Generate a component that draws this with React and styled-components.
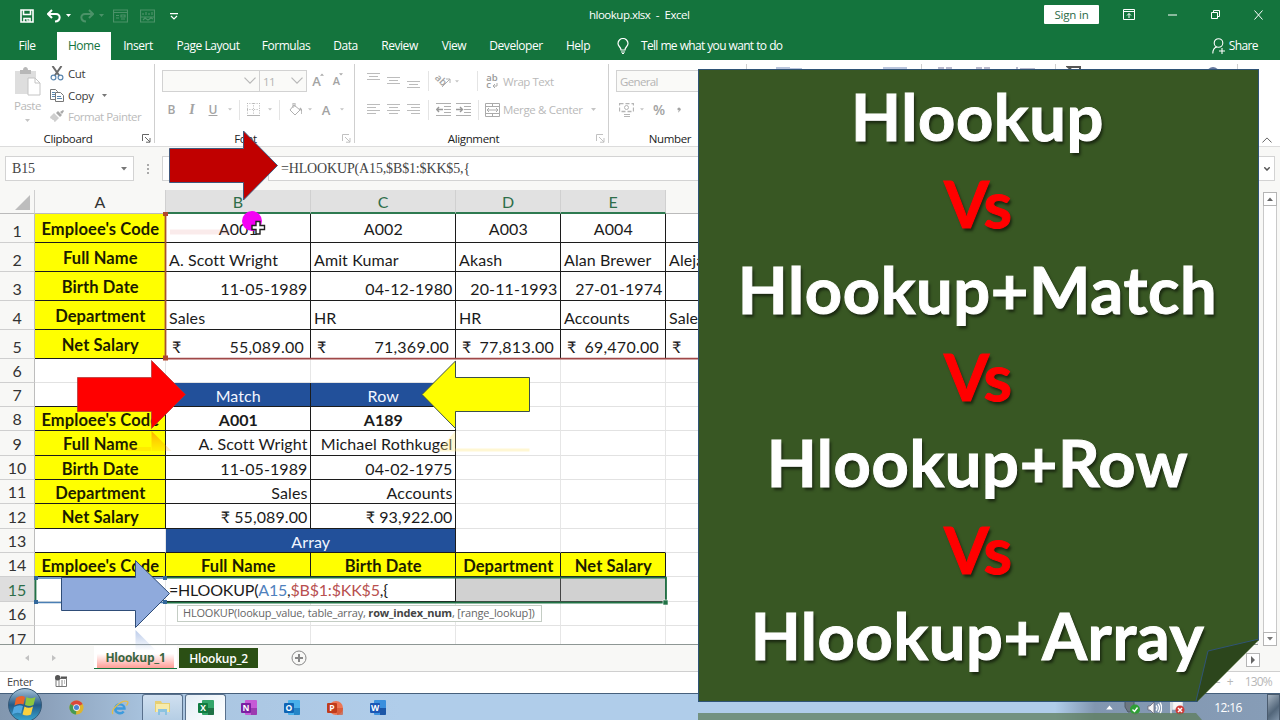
import React from 'react';
import styled, { createGlobalStyle, css } from 'styled-components';

const colors = {
    excel: '#14743d',
    panel: '#385723',
    panelEdge: '#2f5376',
    yellow: '#ffff00',
    blue: '#22509a',
    faint: '#b9b9b9',
    black: '#1c1c1c',
};
const uiFont = `'Open Sans', 'Noto Sans', sans-serif`;
const cellFont = `Lato, 'Noto Sans', sans-serif`;

const GlobalStyle = createGlobalStyle`
    * { box-sizing: border-box; }
    body { margin: 0; overflow: hidden; }
    svg { display: block; flex: none; }
`
const Window = styled.div`
    position: relative;
    width: 1280px;
    height: 720px;
    overflow: hidden;
    display: flex;
    flex-direction: column;
    background: #fff;
    font-family: ${uiFont};
    font-size: 12px;
    color: #333;
    white-space: nowrap;
`

/* title bar and tabs */
const TitleBar = styled.div`
    height: 32px;
    flex: none;
    background: ${colors.excel};
    color: #fff;
    display: grid;
    grid-template-columns: 589px 102px 1fr;
    align-items: center;
    font-size: 11.5px;
    letter-spacing: -0.5px;
`
const QuickTools = styled.div`
    display: flex;
    align-items: center;
    padding-left: 20px;
`
const FileTitle = styled.div`
    padding-bottom: 4px;
    word-spacing: 3px;
`
const WindowTools = styled.div`
    display: flex;
    justify-content: flex-end;
    align-items: center;
    padding-bottom: 3px;
`
const SignIn = styled.div`
    width: 55px;
    height: 19px;
    margin-right: 8px;
    background: #fff;
    color: #2c6b49;
    border-radius: 1px;
    display: flex;
    align-items: center;
    justify-content: center;
    letter-spacing: -0.2px;
`
const Slot = styled.div`
    width: ${props => props.$w}px;
    flex: none;
    display: flex;
    justify-content: center;
    align-items: center;
`
const TabBar = styled.div`
    height: 28px;
    flex: none;
    display: flex;
    background: ${colors.excel};
    color: #fff;
    font-size: 12px;
    letter-spacing: -0.45px;
`
const Tab = styled.div`
    width: ${props => props.$w}px;
    margin-right: ${props => props.$gap || 0}px;
    display: flex;
    align-items: center;
    justify-content: center;
    padding-bottom: 1px;
    ${props => props.$active && css`
        background: #fff;
        color: ${colors.excel};
    `}
`
const TellMe = styled.div`
    display: flex;
    align-items: center;
    gap: 12px;
    padding: 0 0 1px 14px;
    letter-spacing: -0.7px;
    word-spacing: 0.4px;
`
const Share = styled.div`
    display: flex;
    align-items: center;
    gap: 4px;
    margin-left: auto;
    padding: 0 22px 1px 0;
    letter-spacing: -0.6px;
`

/* ribbon */
const Ribbon = styled.div`
    height: 87px;
    flex: none;
    display: flex;
    background: #fff;
    border-bottom: 1px solid #dcdcdc;
    padding-top: 4px;
    font-size: 11.5px;
`
const Group = styled.div`
    width: ${props => props.$w}px;
    height: 79px;
    flex: none;
    display: flex;
    flex-direction: column;
    border-right: 1px solid #cfcfcf;
    color: ${colors.faint};
`
const GroupBody = styled.div`
    height: 67px;
    flex: none;
    display: flex;
    flex-direction: ${props => (props.$row ? 'row' : 'column')};
    padding-left: ${props => props.$left || 0}px;
`
const GroupName = styled.div`
    height: 15px;
    flex: none;
    display: flex;
    align-items: center;
    color: #222;
    font-size: 11.5px;
    letter-spacing: -0.35px;
    span {
        flex: 1;
        padding-right: ${props => props.$shift || 0}px;
        text-align: center;
    }
    svg { margin-right: 3px; opacity: ${props => (props.$dim ? 0.4 : 1)}; }
`
const PasteButton = styled.div`
    width: 50px;
    display: flex;
    flex-direction: column;
    align-items: center;
    padding: 3px 0 0 5px;
    line-height: 20px;
    letter-spacing: -0.5px;
    svg + span { margin-bottom: 3px; }
`
const CommandList = styled.div`
    display: flex;
    flex-direction: column;
`
const Command = styled.div`
    height: 21.5px;
    display: flex;
    align-items: center;
    gap: 4px;
    padding-bottom: 2px;
    color: ${props => (props.$off ? '#bbb' : '#3c3c3c')};
    letter-spacing: ${props => props.$ls || 0}px;
`
const ToolRow = styled.div`
    height: ${props => props.$h || 28}px;
    display: flex;
    align-items: center;
`
const Combo = styled.div`
    width: ${props => props.$w}px;
    height: 22px;
    margin-right: -1px;
    flex: none;
    display: flex;
    align-items: center;
    justify-content: space-between;
    padding: 0 3px;
    border: 1px solid #d2d2d2;
    background: #fafaf8;
    color: #b4b4b4;
    letter-spacing: -0.65px;
`
const Letter = styled.span`
    font-size: ${props => props.$size || 12}px;
    line-height: ${props => props.$lh || 16}px;
    font-weight: ${props => props.$weight || 600};
    font-style: ${props => (props.$italic ? 'italic' : 'normal')};
    font-family: ${props => (props.$italic ? `'Liberation Serif', serif` : uiFont)};
    text-decoration: ${props => (props.$under ? 'underline' : 'none')};
    color: #a3a3a3;
`
const Tick = styled.span`
    align-self: flex-start;
    margin-left: -1px;
`
const ToolLine = styled.div`
    width: 1px;
    height: 20px;
    background: #e4e4e4;
`
const ToolText = styled.span`
    width: ${props => props.$w}px;
    letter-spacing: ${props => props.$ls}px;
`
const TextGlyph = styled.svg`
    overflow: visible;
`
const WrapGlyph = styled.div`
    height: 18px;
    display: flex;
    flex-direction: column;
    justify-content: center;
    font-size: 9.5px;
    font-weight: 600;
    line-height: 7px;
    color: #999;
    div {
        display: flex;
        align-items: flex-end;
        gap: 1px;
    }
`
const HiddenTools = styled.div`
    flex: 1;
    display: flex;
    justify-content: flex-end;
    align-items: flex-end;
    padding: 0 8px 3px 0;
`

/* formula bar */
const FormulaBar = styled.div`
    height: 43px;
    flex: none;
    display: flex;
    align-items: flex-start;
    padding: 9px 0 0 5px;
    background: #f8f8f6;
    font-family: 'Liberation Serif', serif;
    font-size: 14px;
    letter-spacing: -0.15px;
    color: #444;
`
const NameBox = styled.div`
    width: 129px;
    height: 25px;
    display: flex;
    align-items: center;
    justify-content: space-between;
    padding: 0 6px;
    background: #fff;
    border: 1px solid #d3d3d3;
`
const FormulaDots = styled.div`
    width: 28px;
    height: 25px;
    display: flex;
    align-items: center;
    justify-content: center;
`
const FormulaTools = styled.div`
    width: 101px;
    height: 25px;
    margin-right: 5px;
    background: #fff;
    border: 1px solid #d3d3d3;
`
const FormulaInput = styled.div`
    width: 1007px;
    height: 25px;
    display: flex;
    align-items: center;
    justify-content: space-between;
    padding: 1px 4px 0 12px;
    background: #fff;
    border: 1px solid #d3d3d3;
`

/* sheet */
const SheetArea = styled.div`
    height: 456px;
    flex: none;
    display: flex;
    background: #f8f8f6;
`
const Grid = styled.div`
    width: 1258px;
    height: 455px;
    overflow: hidden;
    font-family: ${cellFont};
    font-size: 16px;
    color: #1b1b1b;
    border-bottom: 1px solid #8e9794;
`
const Row = styled.div`
    display: grid;
    grid-template-columns: 35px 131px 145px 145px 105px 105px 1fr;
    height: ${props => props.$h}px;
    background: #fff;
`
const Corner = styled.div`
    display: flex;
    align-items: flex-end;
    justify-content: flex-end;
    padding: 0 4px 3px 0;
    background: #f8f8f6;
    border-right: 1px solid #cfcfcf;
    border-bottom: 1px solid #bbb;
`
const ColumnHead = styled.div`
    display: flex;
    align-items: center;
    justify-content: center;
    background: ${props => (props.$on ? '#e1e1e1' : '#f8f8f6')};
    color: ${props => (props.$on ? '#2e6e4a' : '#333')};
    border-right: 1px solid #d0d0d0;
    border-bottom: ${props => (props.$on ? '2px solid #2e7a50' : '1px solid #bbb')};
    padding-top: ${props => (props.$on ? 1 : 0)}px;
`
const RowHead = styled.div`
    display: flex;
    align-items: flex-end;
    justify-content: center;
    line-height: 22px;
    letter-spacing: -0.1px;
    background: ${props => (props.$on ? '#dedede' : '#f8f8f6')};
    color: ${props => (props.$on ? '#2e6e4a' : '#333')};
    border-right: 1px solid #bdbdbd;
    border-bottom: 1px solid #cfcfcf;
`
const aligns = { l: 'flex-start', c: 'center', r: 'flex-end', s: 'space-between' };
const fills = {
    label: css`
        background: ${colors.yellow};
        color: #1c1c00;
        font-weight: 700;
        font-size: 16.5px;
        letter-spacing: 0.1px;
    `,
    head: css`
        background: ${colors.blue};
        color: #f2f6ff;
    `,
    bold: css`
        font-weight: 700;
        letter-spacing: -0.05px;
    `,
    grey: css`
        background: #d1d1d1;
        border-color: #444;
    `,
};
const Cell = styled.div`
    display: flex;
    align-items: ${props => (props.$low ? 'flex-end' : 'center')};
    justify-content: ${props => aligns[props.$align] || 'center'};
    grid-column: span ${props => props.$span || 1};
    min-width: 0;
    overflow: hidden;
    line-height: 20px;
    letter-spacing: ${props => (props.$money ? 0.25 : 0.1)}px;
    padding-top: ${props => (props.$low ? 0 : 2)}px;
    padding-right: ${props => (props.$money ? 6 : 2.5)}px;
    padding-bottom: ${props => (props.$low ? 1 : 0)}px;
    padding-left: ${props => (props.$money ? 6 : 3)}px;
    border-right: 1px solid ${props => (props.$box ? colors.black : '#e6e6e6')};
    border-bottom: 1px solid ${props => (props.$box || props.$under ? colors.black : '#e2e2e2')};
    ${props => fills[props.$fill]}
`
const FormulaCell = styled(Cell)`
    overflow: visible;
    letter-spacing: -0.2px;
    .ref { color: #4f81bd; }
    .range { color: #b8504f; }
`
const ScrollColumn = styled.div`
    width: 22px;
    display: flex;
    flex-direction: column;
    justify-content: space-between;
    align-items: center;
    padding: 2px 0 0 2px;
`
const ScrollTrack = styled.div`
    width: 14px;
    flex: 1;
    background: #fff;
    border: 1px solid #c9c9c9;
    border-width: 0 1px;
`
const ScrollButton = styled.div`
    width: 14px;
    height: 14px;
    display: flex;
    align-items: center;
    justify-content: center;
    background: #fff;
    border: 1px solid #b5b5b5;
`

/* bottom bars */
const SheetTabs = styled.div`
    height: 26px;
    flex: none;
    display: flex;
    align-items: flex-start;
    background: #f8f8f6;
    border-bottom: 1px solid #cfcfcf;
    font-size: 12px;
    font-weight: 600;
`
const SheetTab = styled.div`
    width: ${props => props.$w}px;
    height: ${props => (props.$active ? 22 : 20)}px;
    margin-top: ${props => (props.$active ? 0 : 2)}px;
    display: flex;
    align-items: center;
    justify-content: center;
    background: ${props => (props.$active ? 'linear-gradient(#fff 35%, #ff9d96)' : '#2b4f14')};
    color: ${props => (props.$active ? '#386641' : '#fff')};
    font-weight: ${props => (props.$active ? 700 : 600)};
    letter-spacing: -0.25px;
    border: 3px solid #fff;
    border-width: ${props => (props.$active ? '0 3px' : '0')};
    box-shadow: ${props => (props.$active ? `0 1px 0 ${colors.excel}` : 'none')};
    margin-right: 2px;
`
const SheetEnd = styled.div`
    margin: 7px 20px 0 auto;
`
const StatusBar = styled.div`
    height: 21px;
    flex: none;
    display: flex;
    align-items: center;
    padding: 0 8px 3px 7px;
    background: #fff;
    font-size: 11px;
    letter-spacing: -0.3px;
    color: #444;
    svg { margin-left: 22px; }
`
const Zoom = styled.div`
    display: flex;
    gap: 7px;
    margin-left: auto;
    color: #b7b7b7;
    font-size: 12px;
    letter-spacing: -0.8px;
    span:nth-child(2) { margin-right: 5px; }
`
const Taskbar = styled.div`
    height: 28px;
    flex: none;
    display: flex;
    align-items: center;
    border-top: 1px solid #46607c;
    background: linear-gradient(90deg, #8297af 0, #8a9fb9 40px, #a9c4df 150px, #b0cdea 400px, #b0cdea 1055px, #8196b0 1095px, #879db7 1280px);
`
const TaskButton = styled.div`
    width: 41px;
    height: 27px;
    margin-right: 2px;
    display: flex;
    align-items: center;
    justify-content: center;
    ${props => props.$open && css`
        border: 1px solid #58708c;
        border-bottom: 0;
        border-radius: 3px 3px 0 0;
        background: ${props.$front ? 'linear-gradient(135deg, #e4eef6, #fff)' : 'linear-gradient(#d0e0f0, #b4cde4)'};
    `}
`
const Tray = styled.div`
    display: flex;
    align-items: center;
    margin-left: auto;
`
const Clock = styled.div`
    width: 78px;
    padding-bottom: 1px;
    text-align: center;
    color: #fff;
    font-size: 12px;
    letter-spacing: -0.6px;
`
const ShowDesktop = styled.div`
    width: 13px;
    height: 27px;
    border: 1px solid #4a5b6e;
    background: linear-gradient(135deg, #a5b2c0, #52667a 60%, #7f93a8);
`

/* things lying over the workbook */
const Overlay = styled.svg`
    position: absolute;
    left: 0;
    top: 0;
`
const Hint = styled.div`
    position: absolute;
    left: 177px;
    top: 605px;
    width: 365px;
    height: 17px;
    display: flex;
    align-items: center;
    padding: 0 0 3px 5px;
    background: #fff;
    border: 1px solid #c4cdc4;
    color: #666;
    font-size: 11px;
    letter-spacing: -0.18px;
    b { color: #444; }
    span { white-space: pre; }
`
const Panel = styled.div`
    position: absolute;
    left: 698px;
    top: 69px;
    width: 561px;
    height: 633px;
    display: flex;
    flex-direction: column;
    align-items: center;
    padding: 3px 2px 0 0;
    background: ${colors.panel};
    border: 1px solid ${colors.panelEdge};
    clip-path: polygon(0 0, 100% 0, 100% 571px, 499px 100%, 0 100%);
`
const PanelLine = styled.div`
    height: 86.5px;
    display: flex;
    align-items: center;
    font-family: ${cellFont};
    font-weight: 700;
    font-size: 65px;
    letter-spacing: ${props => props.$ls}px;
    color: ${props => (props.$vs ? '#ff0000' : '#fff')};
    -webkit-text-stroke: 1px ${props => (props.$vs ? '#ff0000' : '#fff')};
    text-shadow: 2px 3px 3px rgba(0, 0, 0, 0.55);
`

const Caret = ({ color = '#777', size = 6, up }) => (
    <svg width={size} height={size / 2 + 1} viewBox="0 0 6 4">
        <path d={up ? 'M0 4h6L3 .5z' : 'M0 0h6L3 3.5z'} fill={color} />
    </svg>
)
const Chevron = ({ up, w = 12, color = '#b8b8b8', sw = 1.2 }) => (
    <svg width={w} height={w * 0.6} viewBox="0 0 12 7" fill="none" stroke={color} strokeWidth={sw}>
        <path d={up ? 'M.5 6.5L6 1l5.5 5.5' : 'M.5.5L6 6 11.5.5'} />
    </svg>
)
const Launcher = () => (
    <svg width="9" height="9" viewBox="0 0 9 9" fill="none" stroke="#666">
        <path d="M.5 7V.5H7M3 3l5 5M8 4v4.2H4" />
    </svg>
)
const Lines = ({ rows, color = '#bcbcbc' }) => (
    <svg width="14" height="18" viewBox="0 0 14 18" fill="none" stroke={color}>
        {rows.map(([x, y, w]) => <path key={y} d={`M${x} ${y + 0.5}h${w}`} />)}
    </svg>
)
const Indent = ({ right }) => (
    <svg width="16" height="13" viewBox="0 0 16 13" fill="none" stroke="#b0b0b0">
        <path d="M0 .5h15M8 3.5h7M8 6.5h7M8 9.5h7M0 12.5h15" />
        <path d={right ? 'M0 6.5h6M4 4l2.5 2.5L4 9' : 'M1 6.5h6M3 4L.7 6.5 3 9'} stroke="#999" strokeWidth="1.4" />
    </svg>
)
const PasteIcon = () => (
    <svg width="27" height="29" viewBox="0 0 27 29">
        <path d="M1 4h21v23H1z" fill="#dedede" />
        <path d="M6 3h3c0-4 5-4 5 0h3v4H6z" fill="#b8b8b8" />
        <path d="M14 11h7l5 5v12H14z" fill="#fff" stroke="#c4c4c4" />
        <path d="M21 11v5h5" fill="none" stroke="#c4c4c4" />
    </svg>
)
const CutIcon = () => (
    <svg width="14" height="15" viewBox="0 0 14 15" fill="none" strokeWidth="1.6">
        <path d="M2.5 0L9.5 10M11.5 0L4.5 10" stroke="#6b6b6b" strokeWidth="2" />
        <circle cx="3.5" cy="11.5" r="2.4" stroke="#5b87b0" strokeWidth="1.2" />
        <circle cx="10.5" cy="11.5" r="2.4" stroke="#5b87b0" strokeWidth="1.2" />
    </svg>
)
const CopyIcon = () => (
    <svg width="14" height="13" viewBox="0 0 14 13" fill="#fff" stroke="#777">
        <path d="M.5.5h5l2 2v8h-7z" />
        <path d="M2 3.5h3M2 5.5h3M2 7.5h3" stroke="#5b87b0" />
        <path d="M5.5 3.5h5l3 3v6h-8z" />
        <path d="M7 7.5h4M7 9.5h5" stroke="#5b87b0" />
    </svg>
)
const BrushIcon = () => (
    <svg width="14" height="13" viewBox="0 0 14 13">
        <path d="M0 7l4-4 5 5-4 4c-1 0-1-1-1-2-1 1-2-1-2-1-1 0-2-1-2-2z" fill="#cfcfcf" />
        <path d="M6 3l2-2 4 4-2 2zM10 2l3-2 1 1-2 3z" fill="#a9a9a9" />
    </svg>
)
const SaveIcon = () => (
    <svg width="14" height="14" viewBox="0 0 14 14" fill="none" stroke="#fff" strokeWidth="1.6">
        <path d="M1 1h12v12H1zM3.5 1v4.5h7V1M4 13V9.500h6V13" />
        <path d="M6 11h2v2" strokeWidth="1.2" />
    </svg>
)
const UndoIcon = ({ flip, color = '#fff' }) => (
    <svg width="14" height="14" viewBox="0 0 14 14" fill="none" stroke={color} strokeWidth="2">
        <g transform={flip ? 'matrix(-1 0 0 1 14 0)' : undefined}>
            <path d="M5 1L1 5l4 4M1.5 5H9c5 0 5 7-1 7.5" />
        </g>
    </svg>
)
const FormIcon = ({ chart }) => (
    <svg width="15" height="14" viewBox="0 0 15 14" fill="none" stroke="#4b9268" strokeWidth="1.2">
        <path d="M.5 1h14v12H.5z" />
        {chart
            ? <path d="M3 6V4M6 6V3M9 6V4M12 6V3M1 8h13M3 11l2-2 3 2 3-2 2 1" />
            : <path d="M.5 3.5h14M3 6.5h3M3 9h3M8 6h4v2H8zM8 10h4" />}
    </svg>
)
const BulbIcon = () => (
    <svg width="12" height="16" viewBox="0 0 12 16" fill="none" stroke="#fff" strokeWidth="1.2">
        <path d="M4 12C4 9 1 8.5 1 5.5a5 5 0 0110 0C11 8.5 8 9 8 12zM4 14h4M5 15.5h2" />
    </svg>
)
const ShareIcon = () => (
    <svg width="13" height="16" viewBox="0 0 13 16" fill="none" stroke="#fff" strokeWidth="1.1">
        <circle cx="6.5" cy="5" r="4.3" />
        <path d="M.8 15.5c0-4 2-6 4-6.5M10 10v6M7 13h6" />
    </svg>
)
const RestoreIcon = () => (
    <svg width="9" height="9" viewBox="0 0 9 9" fill="none" stroke="#fff">
        <path d="M.5 2.5h6v6h-6zM2.5 2V.5h6v6H7" />
    </svg>
)
const OfficeIcon = ({ color, dark, light, letter, round }) => (
    <svg width="16" height="16" viewBox="0 0 16 16">
        {round
            ? <circle cx="9" cy="8" r="7" fill={light} />
            : <rect x="4" y="0" width="12" height="15" rx="1" fill={light} />}
        <path d="M10 8h6v6q0 1-1 1h-5z" fill={color} opacity=".7" />
        <rect x="0" y="3" width="10" height="10" rx="1" fill={dark} />
        <text x="5" y="11.3" textAnchor="middle" fontFamily="Open Sans" fontWeight="700" fontSize="8.5" fill="#fff">{letter}</text>
    </svg>
)
const ChromeIcon = () => (
    <svg width="15" height="15" viewBox="0 0 16 16">
        <circle cx="8" cy="8" r="7.5" fill="#ddb52f" />
        <path d="M8 8L1.5 4.2A7.5 7.5 0 0114.5 4.2z" fill="#d9473c" />
        <path d="M8 8L1.5 4.2A7.5 7.5 0 007.5 15.5z" fill="#469a50" />
        <circle cx="8" cy="8" r="3.6" fill="#eee" />
        <circle cx="8" cy="8" r="2.7" fill="#4a83d4" />
    </svg>
)
const ExplorerIcon = () => (
    <svg width="18" height="16" viewBox="0 0 18 16" fill="none">
        <path d="M4 8.5h9.5C13.5 3.5 5 2.5 4.2 8.5c0 5 6 6 8.5 3" stroke="#3d9bdd" strokeWidth="2.4" />
        <path d="M2 14C-1 10 11-1 16.5 1.5c1 .5 0 3-1 4" stroke="#e2bd4a" strokeWidth="1.3" />
    </svg>
)
const FolderIcon = () => (
    <svg width="17" height="16" viewBox="0 0 17 16">
        <path d="M1 1h6l1 2h8v9H1z" fill="#e6cf73" />
        <path d="M2 4h13v8H2z" fill="#f7ebaa" />
        <path d="M4 15V9h9v6h-2v-3H6v3z" fill="#8cc3e0" />
    </svg>
)
const StatusIcon = () => (
    <svg width="12" height="12" viewBox="0 0 12 12">
        <path d="M1 3.5h10.5v8H1z" fill="#fff" stroke="#777" />
        <path d="M3 6h2M6 6h2M9 6h1M3 8h2M6 8h2M9 8h1M3 10h2M6 10h2" stroke="#888" />
        <path d="M6 2.5h6" stroke="#555" strokeWidth="2" />
        <circle cx="2.7" cy="2.7" r="2.7" fill="#555" />
    </svg>
)

const money = value => [<span key="s">₹</span>, <span key="v">{value}</span>];
const topRows = [
    { label: "Emploee's Code", align: 'c', cells: ['A001', 'A002', 'A003', 'A004', ''] },
    { label: 'Full Name', align: 'l', cells: ['A. Scott Wright', 'Amit Kumar', 'Akash', 'Alan Brewer', 'Alejandro'] },
    { label: 'Birth Date', align: 'r', cells: ['11-05-1989', '04-12-1980', '20-11-1993', '27-01-1974', ''] },
    { label: 'Department', align: 'l', cells: ['Sales', 'HR', 'HR', 'Accounts', 'Sales'] },
    { label: 'Net Salary', align: 's', cells: ['55,089.00', '71,369.00', '77,813.00', '69,470.00', ''] },
];
const lookupRows = [
    { h: 24, label: "Emploee's Code", cells: ['A001', 'A189'], bold: true },
    { h: 25, label: 'Full Name', cells: ['A. Scott Wright', 'Michael Rothkugel'] },
    { h: 24, label: 'Birth Date', cells: ['11-05-1989', '04-02-1975'] },
    { h: 24, label: 'Department', cells: ['Sales', 'Accounts'] },
    { h: 25, label: 'Net Salary', cells: ['₹ 55,089.00', '₹ 93,922.00'] },
];
const tabs = [
    ['File', 54, 3], ['Home', 54], ['Insert', 54], ['Page Layout', 86], ['Formulas', 70],
    ['Data', 49], ['Review', 59], ['View', 50], ['Developer', 74], ['Help', 50],
];
const panelLines = [
    ['Hlookup', 0.6], ['Vs', -1], ['Hlookup+Match', 0.6], ['Vs', -1],
    ['Hlookup+Row', 0.6], ['Vs', -1], ['Hlookup+Array', 0.6],
];
const Blank = ({ n }) => Array.from({ length: n }, (_, i) => <Cell key={i} />);

const Header = () => (
    <>
        <TitleBar>
            <QuickTools>
                <SaveIcon />
                <Slot $w={6} />
                <Slot $w={28}><UndoIcon /></Slot>
                <Slot $w={0}><Caret color="#fff" size={5} /></Slot>
                <Slot $w={5} />
                <Slot $w={28}><UndoIcon flip color="#4b9268" /></Slot>
                <Slot $w={0}><Caret color="#4b9268" size={5} /></Slot>
                <Slot $w={38}><FormIcon /></Slot>
                <Slot $w={16}><FormIcon chart /></Slot>
                <Slot $w={38}>
                    <svg width="8" height="7" viewBox="0 0 8 7" fill="none" stroke="#fff" strokeWidth="1.2">
                        <path d="M0 .6h8M1 3l3 3 3-3" />
                    </svg>
                </Slot>
            </QuickTools>
            <FileTitle>hlookup.xlsx - Excel</FileTitle>
            <WindowTools>
                <SignIn>Sign in</SignIn>
                <Slot $w={44}>
                    <svg width="12" height="11" viewBox="0 0 12 11" fill="none" stroke="#fff">
                        <path d="M.5.5h11v10H.5zM.5 2.5h11M6 9V4.5M4 6.5l2-2 2 2" />
                    </svg>
                </Slot>
                <Slot $w={43}>
                    <svg width="9" height="2"><path d="M0 1h9" stroke="#fff" /></svg>
                </Slot>
                <Slot $w={43}><RestoreIcon /></Slot>
                <Slot $w={43}>
                    <svg width="9" height="10" viewBox="0 0 9 10" stroke="#fff"><path d="M.5.5l8 9M8.5.5l-8 9" /></svg>
                </Slot>
            </WindowTools>
        </TitleBar>
        <TabBar>
            {tabs.map(([name, w, gap]) => (
                <Tab key={name} $w={w} $gap={gap} $active={name === 'Home'}>{name}</Tab>
            ))}
            <TellMe><BulbIcon />Tell me what you want to do</TellMe>
            <Share><ShareIcon />Share</Share>
        </TabBar>
    </>
)

const RibbonGroups = () => (
    <Ribbon>
        <Group $w={155}>
            <GroupBody $row>
                <PasteButton>
                    <PasteIcon />
                    <span>Paste</span>
                    <Caret color="#c4c4c4" size={5} />
                </PasteButton>
                <CommandList>
                    <Command $ls={-0.4}><CutIcon />Cut</Command>
                    <Command $ls={-0.3}><CopyIcon />Copy<Slot $w={14}><Caret size={5} /></Slot></Command>
                    <Command $off $ls={-0.5}><BrushIcon />Format Painter</Command>
                </CommandList>
            </GroupBody>
            <GroupName $shift={6}><span>Clipboard</span><Launcher /></GroupName>
        </Group>
        <Group $w={200}>
            <GroupBody $left={7}>
                <ToolRow $h={34}>
                    <Combo $w={98}><span /><Chevron /></Combo>
                    <Combo $w={48}>11<Chevron /></Combo>
                    <Slot $w={24}><Letter $size={13}>A</Letter><Tick><Caret up color="#aaa" size={4} /></Tick></Slot>
                    <Slot $w={16}><Letter $size={11}>A</Letter><Tick><Caret color="#aaa" size={4} /></Tick></Slot>
                </ToolRow>
                <ToolRow $h={23}>
                    <Slot $w={19}><Letter>B</Letter></Slot>
                    <Slot $w={22}><Letter $italic $size={14}>I</Letter></Slot>
                    <Slot $w={20}><Letter $under>U</Letter></Slot>
                    <Slot $w={14}><Caret color="#c4c4c4" size={4} /></Slot>
                    <Slot $w={4}><ToolLine /></Slot>
                    <Slot $w={24}>
                        <svg width="13" height="13" viewBox="0 0 13 13" fill="none" stroke="#b5b5b5">
                            <path d="M.5 0v12M6.5 0v12M12.5 0v12M0 .5h12M0 6.5h12" strokeDasharray="1 1.4" />
                            <path d="M0 12.5h13" />
                        </svg>
                    </Slot>
                    <Slot $w={9}><Caret color="#c4c4c4" size={4} /></Slot>
                    <Slot $w={10}><ToolLine /></Slot>
                    <Slot $w={22}>
                        <svg width="13" height="13" viewBox="0 0 13 13" fill="none" stroke="#b0b0b0">
                            <path d="M5 2l6 5-5 5-5-5zM4 5V0h2v4" />
                            <path d="M11 5l2 3v3" strokeWidth="1.6" />
                        </svg>
                    </Slot>
                    <Slot $w={7}><Caret color="#c4c4c4" size={4} /></Slot>
                    <Slot $w={26}><Letter $size={13}>A</Letter></Slot>
                    <Slot $w={6}><Caret color="#c4c4c4" size={4} /></Slot>
                </ToolRow>
            </GroupBody>
            <GroupName $dim $shift={6}><span>Font</span><Launcher /></GroupName>
        </Group>
        <Group $w={254}>
            <GroupBody $left={12}>
                <ToolRow $h={34}>
                    <Lines rows={[[0, 1, 13], [2, 4, 9], [0, 7, 13]]} />
                    <Slot $w={26}><Lines rows={[[0, 5, 13], [2, 8, 9], [0, 11, 13]]} /></Slot>
                    <Lines rows={[[0, 9, 13], [2, 12, 9], [0, 15, 13]]} />
                    <Slot $w={14}><ToolLine /></Slot>
                    <Slot $w={17}>
                        <TextGlyph width="16" height="14" viewBox="0 0 16 14">
                            <text x="-2" y="9" transform="rotate(45 4 7)" fontSize="10" fontWeight="600" fill="#a3a3a3">ab</text>
                            <path d="M6 13l8-8M14 9V5h-4" fill="none" stroke="#b0b0b0" />
                        </TextGlyph>
                    </Slot>
                    <Slot $w={10}><Caret color="#c4c4c4" size={4} /></Slot>
                    <Slot $w={15} />
                    <ToolLine />
                    <Slot $w={8} />
                    <Slot $w={12}>
                        <WrapGlyph>
                            <div>ab</div>
                            <div>
                                c
                                <svg width="6" height="5" fill="none" stroke="#aaa"><path d="M5 0v3H1M3 1L1 3l2 2" /></svg>
                            </div>
                        </WrapGlyph>
                    </Slot>
                    <Slot $w={5} />
                    <ToolText $w={70} $ls={-0.45}>Wrap Text</ToolText>
                </ToolRow>
                <ToolRow $h={23}>
                    <Lines rows={[[0, 3, 13], [0, 6, 9], [0, 9, 13], [0, 12, 9]]} />
                    <Slot $w={26}><Lines rows={[[0, 3, 13], [2, 6, 9], [0, 9, 13], [2, 12, 9]]} /></Slot>
                    <Lines rows={[[0, 3, 13], [4, 6, 9], [0, 9, 13], [4, 12, 9]]} />
                    <Slot $w={14}><ToolLine /></Slot>
                    <Slot $w={17}><Indent /></Slot>
                    <Slot $w={23}><Indent right /></Slot>
                    <Slot $w={6}><ToolLine /></Slot>
                    <Slot $w={22}>
                        <svg width="15" height="14" viewBox="0 0 15 14" fill="none" stroke="#aaa">
                            <path d="M.5.5h14v13H.5zM.5 3.5h14M.5 10.5h14M7.5.5v3M7.5 10.5v3M2 7h11M4 5L2 7l2 2M11 5l2 2-2 2" />
                        </svg>
                    </Slot>
                    <ToolText $w={88} $ls={-0.35}>Merge &amp; Center</ToolText>
                    <Caret color="#c4c4c4" size={5} />
                </ToolRow>
            </GroupBody>
            <GroupName $dim $shift={4}><span>Alignment</span><Launcher /></GroupName>
        </Group>
        <Group $w={138}>
            <GroupBody $left={7}>
                <ToolRow $h={34}><Combo $w={122}>General<Chevron /></Combo></ToolRow>
                <ToolRow $h={23}>
                    <Slot $w={20}>
                        <svg width="15" height="14" viewBox="0 0 15 14" fill="none" stroke="#b5b5b5">
                            <path d="M.5.5h14v8H.5z" strokeWidth="1.3" strokeDasharray="4 2" />
                            <circle cx="7.5" cy="4.5" r="2" />
                            <path d="M5 11.5h6M5 13.5h6" />
                        </svg>
                    </Slot>
                    <Slot $w={12}><Caret color="#c4c4c4" size={4} /></Slot>
                    <Slot $w={22}><Letter $size={14}>%</Letter></Slot>
                    <Slot $w={18}>
                        <svg width="4" height="6" viewBox="0 0 4 6">
                            <circle cx="2" cy="2" r="1.600" fill="#a3a3a3" />
                            <path d="M3.200 2q0 2-2 3" fill="none" stroke="#a3a3a3" />
                        </svg>
                    </Slot>
                </ToolRow>
            </GroupBody>
            <GroupName $shift={15}><span>Number</span></GroupName>
        </Group>
        <Group $w={175}>
            <GroupBody $left={29}>
                <svg width="132" height="8" fill="#b9c4dc">
                    <path d="M0 3h14v1h12v3H0zM107 3h24v3h-24z" />
                </svg>
            </GroupBody>
        </Group>
        <Group $w={134}>
            <GroupBody $left={16}>
                <svg width="100" height="8" fill="#b9b9cc">
                    <path d="M0 3h6v3H0zM8 3h6v3H8zM38 3h6v3h-6zM46 3h6v3h-6zM78 3h2v3h-2zM82 4h15v2H82z" />
                </svg>
            </GroupBody>
        </Group>
        <Group $w={182}>
            <GroupBody $left={10}>
                <svg width="160" height="12" viewBox="0 0 160 12" fill="none" stroke="#555" strokeWidth="2">
                    <path d="M14 5V3H2l6 5" />
                    <circle cx="147" cy="9" r="6" fill="#66789e" stroke="none" />
                </svg>
            </GroupBody>
        </Group>
        <HiddenTools><Chevron up w={10} color="#666" /></HiddenTools>
    </Ribbon>
)

const Sheet = () => (
    <SheetArea>
        <Grid>
            <Row $h={24}>
                <Corner>
                    <svg width="15" height="15"><path d="M15 0v15H0z" fill="#bdbdbd" /></svg>
                </Corner>
                <ColumnHead>A</ColumnHead>
                {['B', 'C', 'D', 'E'].map(name => <ColumnHead key={name} $on>{name}</ColumnHead>)}
                <ColumnHead />
            </Row>
            {topRows.map((row, i) => (
                <Row key={row.label} $h={29}>
                    <RowHead>{i + 1}</RowHead>
                    <Cell $box $fill="label">{row.label}</Cell>
                    {row.cells.map((value, n) => (
                        <Cell key={n} $box $low={i > 0} $align={row.align} $money={row.align === 's'}>
                            {row.align === 's' ? money(value) : value}
                        </Cell>
                    ))}
                </Row>
            ))}
            <Row $h={24}><RowHead>6</RowHead><Blank n={6} /></Row>
            <Row $h={24}>
                <RowHead>7</RowHead>
                <Cell $under />
                <Cell $box $fill="head">Match</Cell>
                <Cell $box $fill="head">Row</Cell>
                <Blank n={3} />
            </Row>
            {lookupRows.map((row, i) => (
                <Row key={row.label} $h={row.h}>
                    <RowHead>{i + 8}</RowHead>
                    <Cell $box $fill="label">{row.label}</Cell>
                    {row.cells.map(value => (
                        <Cell key={value} $box $align={row.bold ? 'c' : 'r'} $fill={row.bold ? 'bold' : ''}>{value}</Cell>
                    ))}
                    <Blank n={3} />
                </Row>
            ))}
            <Row $h={24}>
                <RowHead>13</RowHead>
                <Cell $under />
                <Cell $box $span={2} $fill="head">Array</Cell>
                <Cell $under />
                <Cell $under />
                <Cell />
            </Row>
            <Row $h={24}>
                <RowHead>14</RowHead>
                {["Emploee's Code", 'Full Name', 'Birth Date', 'Department', 'Net Salary'].map(name => (
                    <Cell key={name} $box $fill="label">{name}</Cell>
                ))}
                <Cell />
            </Row>
            <Row $h={25}>
                <RowHead $on>15</RowHead>
                <Cell />
                <FormulaCell $box $span={2} $align="l">
                    =HLOOKUP(<span className="ref">A15</span>,<span className="range">$B$1:$KK$5</span>,{'{'}
                </FormulaCell>
                <Cell $box $fill="grey" />
                <Cell $box $fill="grey" />
                <Cell />
            </Row>
            <Row $h={24}><RowHead>16</RowHead><Blank n={6} /></Row>
            <Row $h={25}><RowHead>17</RowHead><Blank n={6} /></Row>
        </Grid>
        <ScrollColumn>
            <ScrollButton><Caret up color="#666" /></ScrollButton>
            <ScrollTrack />
            <ScrollButton><Caret color="#777" /></ScrollButton>
        </ScrollColumn>
    </SheetArea>
)

const Footer = () => (
    <>
        <SheetTabs>
            <Slot $w={94}>
                <svg width="94" height="24" fill="#c2c2c2"><path d="M29 9v6l-4-3zM52 9v6l4-3z" /></svg>
            </Slot>
            <SheetTab $active $w={83}>Hlookup_1</SheetTab>
            <SheetTab $w={79}>Hlookup_2</SheetTab>
            <Slot $w={78}>
                <svg width="16" height="24" viewBox="0 0 16 24" fill="none" stroke="#888">
                    <circle cx="8" cy="12" r="7" />
                    <path d="M4 12h8M8 8v8" strokeWidth="2" />
                </svg>
            </Slot>
            <SheetEnd>
                <ScrollButton>
                    <svg width="4" height="8"><path d="M0 0v8l4-4z" fill="#666" /></svg>
                </ScrollButton>
            </SheetEnd>
        </SheetTabs>
        <StatusBar>
            Enter<StatusIcon />
            <Zoom><span>–</span><span>+</span><span>130%</span></Zoom>
        </StatusBar>
        <Taskbar>
            <Slot $w={56} />
            <TaskButton><ChromeIcon /></TaskButton>
            <TaskButton><ExplorerIcon /></TaskButton>
            <TaskButton $open><FolderIcon /></TaskButton>
            <TaskButton $open $front><OfficeIcon letter="X" color="#185c37" dark="#107c41" light="#33a56a" /></TaskButton>
            <TaskButton><OfficeIcon letter="N" color="#8a2c9f" dark="#7b1fa2" light="#c65ad6" /></TaskButton>
            <TaskButton><OfficeIcon letter="O" color="#1672b8" dark="#0f65b5" light="#48b0ea" /></TaskButton>
            <TaskButton><OfficeIcon round letter="P" color="#d35230" dark="#c03c1c" light="#ec7654" /></TaskButton>
            <TaskButton><OfficeIcon letter="W" color="#103f91" dark="#1b57b5" light="#3b90de" /></TaskButton>
            <Tray>
                <Slot $w={22}><Caret up color="#fff" size={7} /></Slot>
                <Slot $w={23}>
                    <svg width="16" height="15" viewBox="0 0 16 15">
                        <path d="M1 1h9v6L7 12H4L1 7z" fill="#6c7782" stroke="#4f5a64" />
                        <circle cx="11" cy="9.5" r="5" fill="#2fa036" />
                        <path d="M8.5 9.5l2 2 3-4" fill="none" stroke="#fff" strokeWidth="1.4" />
                    </svg>
                </Slot>
                <Slot $w={23}>
                    <svg width="15" height="14" viewBox="0 0 15 14" fill="none" stroke="#fff" strokeWidth="1.3">
                        <path d="M1 5h2l4-4v12L3 9H1z" fill="#f5f5f5" stroke="#667" strokeWidth=".8" />
                        <path d="M9 4.5q2 2.5 0 5M11 3q3 4 0 8M13 1.5q3.5 5.5 0 11" />
                    </svg>
                </Slot>
                <Slot $w={23}>
                    <svg width="15" height="15" viewBox="0 0 15 15">
                        <path d="M1 0v14M3 1h9v8H3z" fill="#f5f5f5" stroke="#eee" strokeWidth="1.5" />
                        <circle cx="10" cy="10" r="4.5" fill="#cf3a36" />
                        <path d="M8 8l4 4M12 8l-4 4" stroke="#fff" strokeWidth="1.5" />
                    </svg>
                </Slot>
                <Clock>12:16</Clock>
                <ShowDesktop />
            </Tray>
        </Taskbar>
    </>
)

const Shapes = () => (
    <Overlay width="1280" height="720" viewBox="0 0 1280 720">
        <defs>
            <linearGradient id="fadeRed" x1="0" y1="0" x2="0" y2="1">
                <stop offset="0" stopColor="#ff7a00" stopOpacity=".6" />
                <stop offset="1" stopColor="#ffa000" stopOpacity=".15" />
            </linearGradient>
            <linearGradient id="fadeBlue" x1="0" y1="0" x2="0" y2="1">
                <stop offset="0" stopColor="#8faadc" stopOpacity=".6" />
                <stop offset="1" stopColor="#8faadc" stopOpacity=".03" />
            </linearGradient>
            <linearGradient id="orb" x1="0" y1="0" x2="0" y2="1">
                <stop offset="0" stopColor="#aac5da" />
                <stop offset=".5" stopColor="#245b88" />
                <stop offset="1" stopColor="#39a9d4" />
            </linearGradient>
        </defs>

        {/* range borders drawn while the formula is being typed */}
        <path d="M165.5 214v144" stroke="#a5512f" strokeWidth="1.8" />
        <path d="M165 358.7h533" stroke="#a04848" strokeWidth="1.8" />
        <path d="M163 355.5h5v5h-5zM163 212h5v4h-5z" fill="#b0482e" />
        <path d="M35.5 578h130M35.5 602.5h130" stroke="#4a7fb5" strokeWidth="1.5" />
        <path d="M166 577.7h500v25H166M35.5 577v25" fill="none" stroke="#217346" strokeWidth="1.8" />
        <path d="M663 600h5v5h-5z" fill="#217346" stroke="#fff" strokeWidth=".6" />
        <path d="M34 576h4v4h-4zM34 600h4v4h-4zM163 576h4v4h-4zM163 600h4v4h-4z" fill="#33689b" />

        {/* reflections under the arrows */}
        <path d="M170 229.5h60v5h-60z" fill="#e08080" opacity=".16" />
        <path d="M151.500 431l20 20h-20z" fill="url(#fadeRed)" />
        <path d="M126 447h25v4h-25z" fill="#ffa000" opacity=".2" />
        <path d="M455.5 431v17.5h74v3h-92z" fill="#ffe980" opacity=".35" />
        <path d="M135.500 630l20 20h-20z" fill="url(#fadeBlue)" />

        <path d="M169.5 148.5h74v-17.5l34 34.5-34 34.5v-17.5h-74z" fill="#c00000" stroke="#41597d" />
        <path d="M77.5 377.5h74v-17l34 34-34 34v-17h-74z" fill="#ff0000" stroke="#a33" strokeWidth=".7" />
        <path d="M529.5 377.5h-74v-16.5l-33.5 33.5 33.5 34v-17h74z" fill="#ffff00" stroke="#3b4f4a" />
        <path d="M61.5 577.5h74v-17l34 33-34 34v-17h-74z" fill="#8faadc" stroke="#2f4d78" />

        {/* highlighted pointer */}
        <circle cx="252" cy="221" r="10" fill="#f400f4" />
        <path d="M256 221.500h4v4h4.500v4H260v4.500h-4v-4.500h-4v-4h4z" fill="#fff" stroke="#222" strokeWidth="1.400" />

        <circle cx="25" cy="705" r="16.5" fill="url(#orb)" stroke="#375a78" />
        <path d="M16 698q5-3.500 9-1l-1.500 7.500q-4-2-9 1z" fill="#e8642d" />
        <path d="M26.500 697q4 2.500 9 0l-2 8q-4 2-8.500 0z" fill="#8dc63f" />
        <path d="M14 707q5-3 9-1l-2 7.500q-4-2-9 1z" fill="#51a8e0" />
        <path d="M24.500 706.500q4 2.500 8.500 0l-2 8q-4 2-8.500 0z" fill="#fbd13f" />

        <path d="M698 713h498l6 7H698z" fill="#5b7b58" opacity=".72" />
    </Overlay>
)

const Fold = () => (
    <Overlay width="1280" height="720" viewBox="0 0 1280 720">
        <path d="M1259 639l-51 12-11.5 50.5z" fill="#2c461c" />
        <path d="M1259 639l-51 12-12 50" fill="none" stroke={colors.panelEdge} />
    </Overlay>
)

const App = () => (
    <Window>
        <GlobalStyle />
        <Header />
        <RibbonGroups />
        <FormulaBar>
            <NameBox>B15<Caret size={6} /></NameBox>
            <FormulaDots>
                <svg width="2" height="12" fill="#aaa"><path d="M0 1h2v2H0zM0 5h2v2H0zM0 9h2v2H0z" /></svg>
            </FormulaDots>
            <FormulaTools />
            <FormulaInput>=HLOOKUP(A15,$B$1:$KK$5,{'{'}<Chevron w={6} color="#555" sw={3} /></FormulaInput>
        </FormulaBar>
        <Sheet />
        <Footer />
        <Hint>
            <span>HLOOKUP(lookup_value, table_array, </span><b>row_index_num</b><span>, [range_lookup])</span>
        </Hint>
        <Shapes />
        <Panel>
            {panelLines.map(([text, ls], i) => (
                <PanelLine key={i} $ls={ls} $vs={text === 'Vs'}>{text}</PanelLine>
            ))}
        </Panel>
        <Fold />
    </Window>
)

export default App;
